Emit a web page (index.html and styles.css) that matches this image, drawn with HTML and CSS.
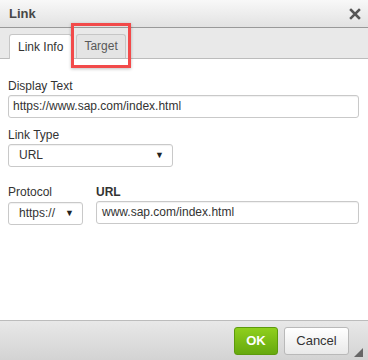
FILE: index.html
```html
<!DOCTYPE html>
<html>
<head>
  <title>Link</title>
  <link rel="stylesheet" href="styles.css">
</head>
<body>
  <div class="dialog">
    <!-- Title bar -->
    <div class="title-bar">
      <span class="title">Link</span>
      <svg class="close" width="12" height="12" viewBox="0 0 12 12">
        <path d="M2 2 L10 10 M10 2 L2 10" stroke="#555" stroke-width="2.5" stroke-linecap="square"/>
      </svg>
    </div>

    <!-- Tabs -->
    <div class="tab-bar">
      <div class="tab active">Link Info</div>
      <div class="tab">Target</div>
      <div class="highlight"></div>
    </div>

    <!-- Form -->
    <div class="content">
      <div class="field">
        <label>Display Text</label>
        <div class="input">https://www.sap.com/index.html</div>
      </div>
      <div class="field">
        <label>Link Type</label>
        <div class="select type-select"><span>URL</span><span class="arrow">▼</span></div>
      </div>
      <div class="row">
        <div class="field">
          <label>Protocol</label>
          <div class="select protocol-select"><span>https://</span><span class="arrow">▼</span></div>
        </div>
        <div class="field grow">
          <label class="bold">URL</label>
          <div class="input url-input">www.sap.com/index.html</div>
        </div>
      </div>
    </div>

    <!-- Footer -->
    <div class="footer">
      <button class="btn ok">OK</button>
      <button class="btn cancel">Cancel</button>
      <div class="resize"></div>
    </div>
  </div>
</body>
</html>
```

FILE: styles.css
```css
body {
  margin: 0;
  font-family: 'Liberation Sans', Arial, sans-serif;
  color: #333;
  background: #fff;
}
.dialog {
  position: relative;
  width: 368px;
  height: 360px;
  display: flex;
  flex-direction: column;
}
.title-bar {
  height: 27px;
  display: flex;
  align-items: center;
  justify-content: space-between;
  padding: 0 7px 0 9px;
  background: linear-gradient(#f8f8f8, #e2e2e2);
  border-bottom: 1px solid #999;
}
.title {
  font-size: 13px;
  font-weight: bold;
  color: #474747;
  margin-top: -1px;
}
.close {
  margin-top: 1px;
}
.tab-bar {
  position: relative;
  height: 30px;
  display: flex;
  align-items: flex-end;
  gap: 4px;
  padding-left: 9px;
  background: #e9e9e9;
  border-bottom: 1px solid #bcbcbc;
}
.tab {
  height: 23px;
  line-height: 23px;
  padding: 0 7px;
  font-size: 12px;
  color: #595959;
  background: #e4e4e4;
  border: 1px solid #c6c6c6;
  border-bottom: none;
  border-radius: 3px 3px 0 0;
}
.tab.active {
  height: 24px;
  line-height: 25px;
  padding: 0 8px;
  background: #fff;
  color: #333;
  margin-bottom: -1px;
}
.highlight {
  position: absolute;
  left: 71px;
  top: -5px;
  width: 54px;
  height: 39px;
  border: 3px solid #f24a4a;
  box-shadow: 0 1px 3px rgba(0, 0, 0, 0.25);
}
.content {
  flex: 1;
  display: flex;
  flex-direction: column;
  gap: 10px;
  padding: 20px 9px 0 8px;
}
.field {
  display: flex;
  flex-direction: column;
  gap: 2px;
}
.field label {
  font-size: 12px;
  color: #333;
  line-height: 14px;
}
.field label.bold {
  font-weight: bold;
}
.input, .select {
  height: 21px;
  line-height: 21px;
  font-size: 12px;
  color: #333;
  border: 1px solid #c9c9c9;
  border-radius: 3px;
  padding: 0 4px;
  background: #fff;
  box-shadow: inset 0 1px 1px rgba(0, 0, 0, 0.06);
}
.url-input {
  padding: 0 5px;
}
.select {
  display: flex;
  justify-content: space-between;
  padding: 0 8px 0 10px;
}
.arrow {
  font-size: 9px;
  color: #222;
}
.type-select {
  width: 145px;
}
.protocol-select {
  width: 55px;
  margin-top: 1px;
}
.row {
  display: flex;
  gap: 13px;
  margin-top: 8px;
}
.grow {
  flex: 1;
}
.footer {
  position: relative;
  height: 39px;
  display: flex;
  align-items: center;
  justify-content: flex-end;
  gap: 6px;
  padding-right: 19px;
  background: linear-gradient(#e8e8e8, #d3d3d3);
  border-top: 1px solid #bcbcbc;
}
.btn {
  height: 28px;
  font-family: 'Liberation Sans', Arial, sans-serif;
  font-size: 13px;
  border-radius: 3px;
  padding: 0 11px;
}
.ok {
  width: 44px;
  font-weight: bold;
  color: #fff;
  background: linear-gradient(#8fcf1d, #66a90e);
  border: 1px solid #5c9a0c;
}
.cancel {
  width: 65px;
  color: #333;
  background: linear-gradient(#fff, #e9e9e9);
  border: 1px solid #b9b9b9;
}
.resize {
  position: absolute;
  right: 5px;
  bottom: 3px;
  width: 0;
  height: 0;
  border-left: 9px solid transparent;
  border-bottom: 9px solid #666;
}
```
